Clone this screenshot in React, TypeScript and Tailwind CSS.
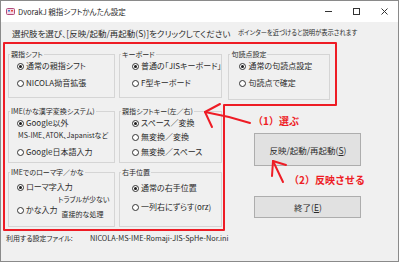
import React from 'react'

const jp = "font-['Noto_Sans_CJK_JP','Noto_Sans',sans-serif] [font-feature-settings:'palt']"

function Radio({ checked, children, className = '' }: { checked?: boolean; children: React.ReactNode; className?: string }) {
    return (
        <div className={`flex h-[12px] items-center ${className}`}>
            <span className="flex h-[7px] w-[7px] shrink-0 items-center justify-center rounded-full border border-[#333] bg-white">
                {checked && <span className="h-[3px] w-[3px] rounded-full bg-[#1a1a1a]" />}
            </span>
            <span className="ml-[2px] whitespace-nowrap text-[8px] leading-[12px]">{children}</span>
        </div>
    )
}

function Group({ title, className = '', bodyClass = '', children }: { title: string; className?: string; bodyClass?: string; children: React.ReactNode }) {
    return (
        <fieldset className={`border border-[#d5d5d5] p-0 ${className}`}>
            <legend className="ml-[1px] px-[1px] text-[7px] leading-[12px] whitespace-nowrap">{title}</legend>
            <div className={bodyClass}>{children}</div>
        </fieldset>
    )
}

function Small({ children, className = '' }: { children: React.ReactNode; className?: string }) {
    return <div className={`h-[10px] whitespace-nowrap text-[7px] leading-[10px] ${className}`}>{children}</div>
}

function App() {
    return (
        <div className={`relative h-[262px] w-[399px] border border-[#8a8a8a] bg-[#f0f0f0] text-[#2a2a2a] ${jp}`}>
            {/* title bar */}
            <div className="flex h-[21px] items-center bg-white">
                <svg className="ml-[5px]" width="9" height="9" viewBox="0 0 9 9">
                    <rect x="0.5" y="1.5" width="8" height="6" rx="1" fill="#f4d8e4" stroke="#b04a7a" />
                    <rect x="2" y="3" width="2" height="1.5" fill="#3a7bd5" />
                    <rect x="5" y="3" width="2" height="1.5" fill="#e0463c" />
                </svg>
                <span className="ml-[3px] text-[7.5px] leading-[10px]">DvorakJ 親指シフトかんたん設定</span>
                <div className="ml-auto flex h-full">
                    <div className="flex w-[28px] items-center justify-center">
                        <svg width="7" height="7" viewBox="0 0 7 7"><line x1="0" y1="3.5" x2="7" y2="3.5" stroke="#333" /></svg>
                    </div>
                    <div className="flex w-[28px] items-center justify-center">
                        <svg width="7" height="7" viewBox="0 0 7 7"><rect x="0.5" y="0.5" width="6" height="6" fill="none" stroke="#333" /></svg>
                    </div>
                    <div className="flex w-[28px] items-center justify-center">
                        <svg width="7" height="7" viewBox="0 0 7 7"><path d="M0.5 0.5L6.5 6.5M6.5 0.5L0.5 6.5" stroke="#333" /></svg>
                    </div>
                </div>
            </div>

            {/* instruction */}
            <div className="mt-[5px] flex h-[12px] items-center pl-[11px]">
                <span className="w-[226px] whitespace-nowrap text-[8.5px] leading-[12px]">選択肢を選び、[反映/起動/再起動(S)]をクリックしてください</span>
                <span className="whitespace-nowrap text-[6.3px] leading-[10px]">ポインターを近づけると説明が表示されます</span>
            </div>

            {/* groups */}
            <div className="mt-[9px] flex pl-[7px]">
                <div className="flex flex-col">
                    <div className="flex gap-[4px]">
                        <Group title="親指シフト" className="h-[50px] w-[107px]" bodyClass="pl-[8px]">
                            <Radio checked>通常の親指シフト</Radio>
                            <Radio className="mt-[5px]">NICOLA拗音拡張</Radio>
                        </Group>
                        <Group title="キーボード" className="h-[50px] w-[103px]" bodyClass="pl-[12px]">
                            <Radio checked>普通の「JISキーボード」</Radio>
                            <Radio className="mt-[5px]">F型キーボード</Radio>
                        </Group>
                    </div>
                    <div className="mt-[7px] flex gap-[4px]">
                        <Group title="IME(かな漢字変換システム)" className="h-[58px] w-[107px]" bodyClass="pl-[8px]">
                            <Radio checked>Google以外</Radio>
                            <Small className="ml-[1px] mt-[1px]">MS-IME、ATOK、Japanistなど</Small>
                            <Radio className="mt-[6px]">Google日本語入力</Radio>
                        </Group>
                        <Group title="親指シフトキー(左／右)" className="h-[58px] w-[103px]" bodyClass="pl-[12px]">
                            <Radio checked>スペース／変換</Radio>
                            <Radio className="mt-[2px]">無変換／変換</Radio>
                            <Radio className="mt-[3px]">無変換／スペース</Radio>
                        </Group>
                    </div>
                    <div className="mt-[3px] flex gap-[4px]">
                        <Group title="IMEでのローマ字／かな" className="h-[61px] w-[107px]" bodyClass="pl-[8px]">
                            <Radio checked className="mt-[3px]">ローマ字入力</Radio>
                            <Small className="ml-[41px] mt-[1px]">トラブルが少ない</Small>
                            <div className="flex items-start">
                                <Radio>かな入力</Radio>
                                <Small className="ml-[4px] mt-[5px]">直接的な処理</Small>
                            </div>
                        </Group>
                        <Group title="右手位置" className="h-[61px] w-[103px]" bodyClass="pl-[12px]">
                            <Radio checked className="mt-[4px]">通常の右手位置</Radio>
                            <Radio className="mt-[7px]">一列右にずらす(orz)</Radio>
                        </Group>
                    </div>
                </div>

                <div className="ml-[6px] flex flex-col">
                    <Group title="句読点設定" className="h-[52px] w-[102px]" bodyClass="pl-[10px]">
                        <Radio checked>通常の句読点設定</Radio>
                        <Radio className="mt-[5px]">句読点で確定</Radio>
                    </Group>
                    <button className="ml-[26px] mt-[33px] flex h-[33px] w-[107px] items-center justify-center border border-[#adadad] bg-[#e1e1e1] text-[8.5px] leading-[12px]">
                        反映/起動/再起動(<span className="underline">S</span>)
                    </button>
                    <button className="ml-[26px] mt-[30px] flex h-[22px] w-[107px] items-center justify-center border border-[#adadad] bg-[#e1e1e1] text-[8.5px] leading-[12px]">
                        終了(<span className="underline">E</span>)
                    </button>
                </div>
            </div>

            {/* file row */}
            <div className="mt-[6px] flex h-[10px] items-center pl-[5px] text-[7px] leading-[10px]">
                <span className="w-[84px] whitespace-nowrap">利用する設定ファイル:</span>
                <span className="whitespace-nowrap text-[7.3px]">NICOLA-MS-IME-Romaji-JIS-SpHe-Nor.ini</span>
            </div>

            {/* red annotations */}
            <svg className="pointer-events-none absolute left-[-1px] top-[-1px]" width="399" height="262" viewBox="0 0 399 262">
                <g fill="none" stroke="#ee1c25" strokeWidth="2" strokeLinecap="round" strokeLinejoin="round">
                    <path d="M4 43H336V105H224V230H4Z" />
                    <path d="M250 123Q228 116 205 112" />
                    <path d="M220 104L205 112L212 127" />
                    <path d="M283 182L273 161" />
                    <path d="M286 165L273 161L272 176" />
                </g>
            </svg>
            <div className="pointer-events-none absolute left-[252px] top-[113px] whitespace-nowrap font-['Noto_Sans_CJK_JP',sans-serif] text-[10px] font-bold leading-[14px] text-[#ee1c25] [font-feature-settings:normal]">（1）選ぶ</div>
            <div className="pointer-events-none absolute left-[288px] top-[172px] whitespace-nowrap font-['Noto_Sans_CJK_JP',sans-serif] text-[10px] font-bold leading-[14px] text-[#ee1c25] [font-feature-settings:normal]">（2）反映させる</div>
        </div>
    )
}

export default App
